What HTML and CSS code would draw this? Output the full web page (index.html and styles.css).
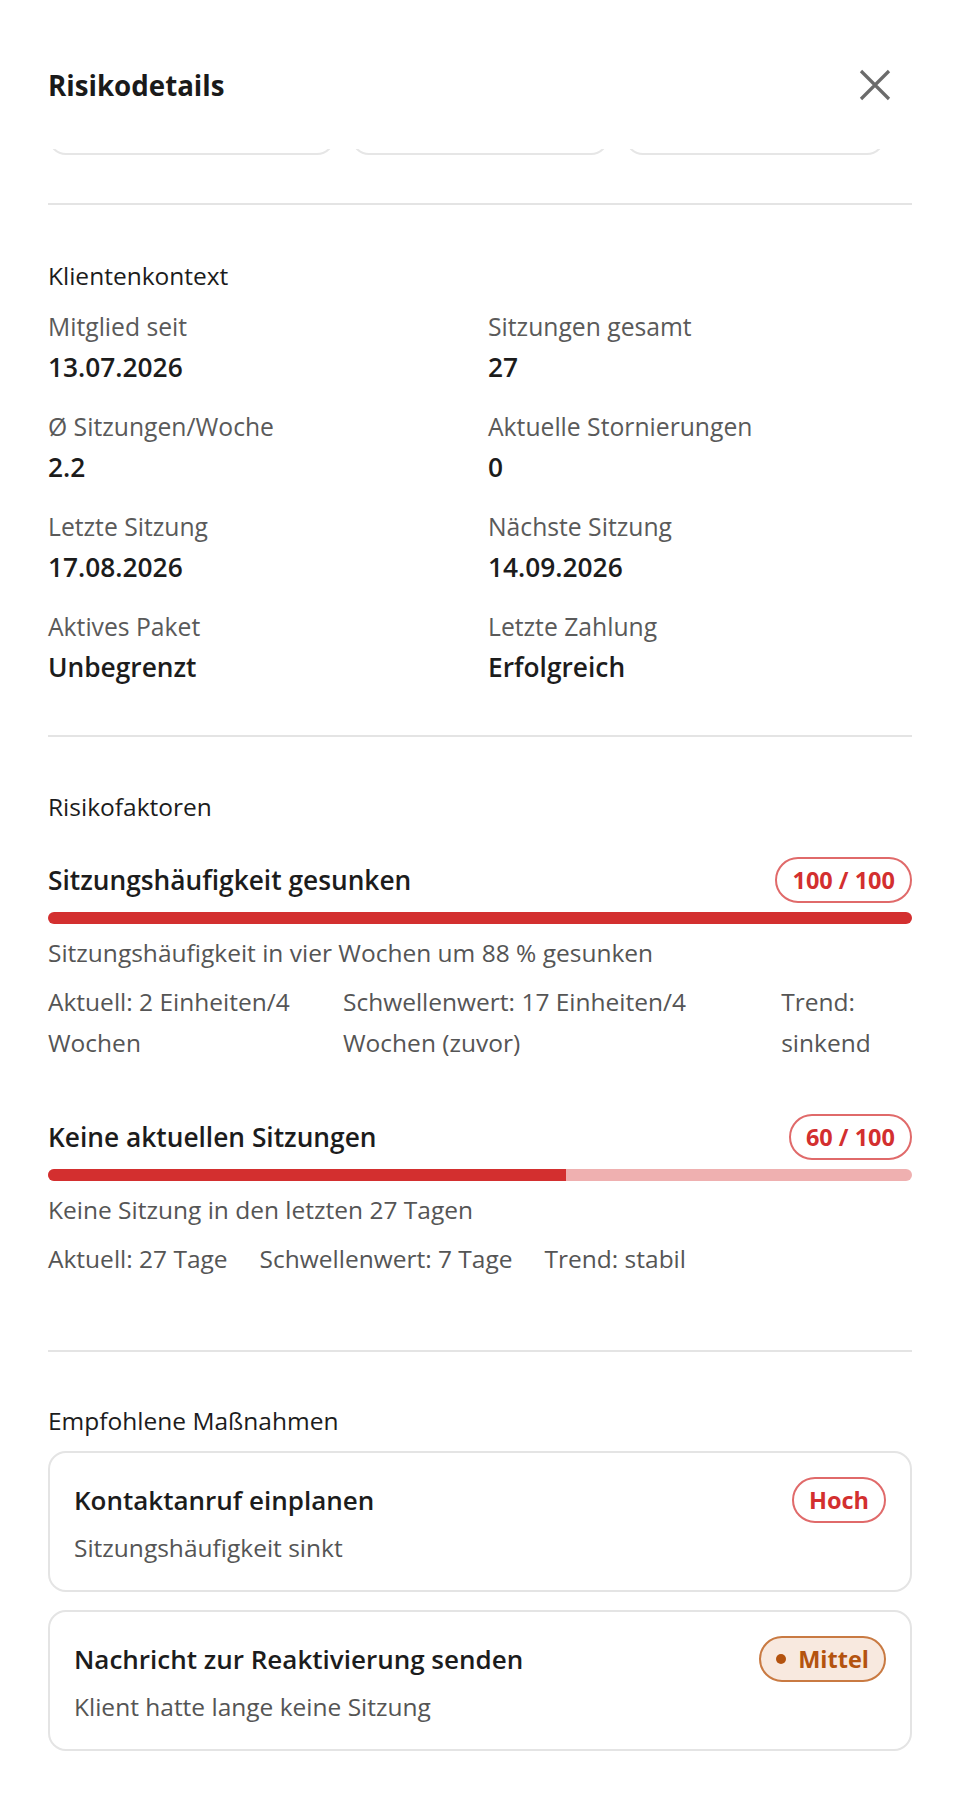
FILE: index.html
```html
<!DOCTYPE html>
<html lang="de">
<head>
<meta charset="utf-8">
<title>Risikodetails</title>
<link rel="stylesheet" href="styles.css">
</head>
<body>
<div class="panel">
  <header class="header">
    <h1 class="title">Risikodetails</h1>
    <button class="close" aria-label="Schließen">
      <svg width="40" height="40" viewBox="0 0 40 40" aria-hidden="true">
        <path d="M6 6 L34 34 M34 6 L6 34" stroke="#6b6b6b" stroke-width="3.2" fill="none"/>
      </svg>
    </button>
  </header>
  <div class="scroll">
    <div class="stats">
      <div class="stat stat-a"></div>
      <div class="stat stat-b"></div>
      <div class="stat stat-c"></div>
    </div>

    <section class="section section-context">
      <h2 class="section-title">Klientenkontext</h2>
      <div class="context-grid">
        <div class="item"><div class="label">Mitglied seit</div><div class="value">13.07.2026</div></div>
        <div class="item"><div class="label">Sitzungen gesamt</div><div class="value">27</div></div>
        <div class="item"><div class="label">Ø Sitzungen/Woche</div><div class="value">2.2</div></div>
        <div class="item"><div class="label">Aktuelle Stornierungen</div><div class="value">0</div></div>
        <div class="item"><div class="label">Letzte Sitzung</div><div class="value">17.08.2026</div></div>
        <div class="item"><div class="label">Nächste Sitzung</div><div class="value">14.09.2026</div></div>
        <div class="item"><div class="label">Aktives Paket</div><div class="value">Unbegrenzt</div></div>
        <div class="item"><div class="label">Letzte Zahlung</div><div class="value">Erfolgreich</div></div>
      </div>
    </section>

    <section class="section section-factors">
      <h2 class="section-title">Risikofaktoren</h2>
      <div class="factors">
        <div class="factor">
          <div class="factor-head">
            <span class="factor-title">Sitzungshäufigkeit gesunken</span>
            <span class="badge badge-red">100 / 100</span>
          </div>
          <div class="bar"><div class="bar-fill" style="width:100%"></div></div>
          <p class="factor-desc">Sitzungshäufigkeit in vier Wochen um 88 % gesunken</p>
          <div class="metrics">
            <span>Aktuell: 2 Einheiten/4 Wochen</span>
            <span>Schwellenwert: 17 Einheiten/4 Wochen (zuvor)</span>
            <span>Trend: sinkend</span>
          </div>
        </div>
        <div class="factor">
          <div class="factor-head">
            <span class="factor-title">Keine aktuellen Sitzungen</span>
            <span class="badge badge-red">60 / 100</span>
          </div>
          <div class="bar"><div class="bar-fill" style="width:60%"></div></div>
          <p class="factor-desc">Keine Sitzung in den letzten 27 Tagen</p>
          <div class="metrics">
            <span>Aktuell: 27 Tage</span>
            <span>Schwellenwert: 7 Tage</span>
            <span>Trend: stabil</span>
          </div>
        </div>
      </div>
    </section>

    <section class="section section-actions">
      <h2 class="section-title">Empfohlene Maßnahmen</h2>
      <div class="actions">
        <div class="action">
          <div class="action-head">
            <span class="action-title">Kontaktanruf einplanen</span>
            <span class="badge badge-red">Hoch</span>
          </div>
          <p class="action-desc">Sitzungshäufigkeit sinkt</p>
        </div>
        <div class="action">
          <div class="action-head">
            <span class="action-title">Nachricht zur Reaktivierung senden</span>
            <span class="badge badge-orange"><span class="dot"></span>Mittel</span>
          </div>
          <p class="action-desc">Klient hatte lange keine Sitzung</p>
        </div>
      </div>
    </section>
  </div>
</div>
</body>
</html>
```

FILE: styles.css
```css
* {
  box-sizing: border-box;
}

html, body {
  margin: 0;
  padding: 0;
  background: #ffffff;
}

body {
  font-family: "Open Sans", "Noto Sans", "Liberation Sans", sans-serif;
  color: #1c1c1c;
}

.panel {
  width: 960px;
}

.header {
  height: 149px;
  padding: 65px 48px 44px;
  display: flex;
  align-items: center;
  justify-content: space-between;
}

.title {
  margin: 0;
  font-size: 27.7px;
  line-height: 40px;
  font-weight: 700;
  color: #1a1a1a;
}

.close {
  width: 40px;
  height: 40px;
  margin-right: 17px;
  padding: 0;
  border: 0;
  background: none;
  display: block;
}

.close svg {
  display: block;
}

.scroll {
  overflow: hidden;
  padding: 0 48px;
}

.stats {
  display: flex;
  gap: 16px;
  height: 100px;
  margin-top: -94px;
}

.stat {
  height: 100px;
  border: 2px solid #e6e6e6;
  border-radius: 18px;
  background: #fff;
}

.stat-a { width: 287px; }
.stat-b { width: 258px; }
.stat-c { width: 260px; }

.section {
  border-top: 2px solid #e4e4e4;
}

.section-context {
  margin-top: 48px;
  padding: 53px 0 47px;
}

.section-factors {
  padding: 52px 0 71px;
}

.section-actions {
  padding: 51px 0 48px;
}

.section-title {
  margin: 0;
  font-size: 24.5px;
  line-height: 36px;
  font-weight: 500;
  color: #1c1c1c;
}

.context-grid {
  margin-top: 14px;
  display: grid;
  grid-template-columns: 1fr 1fr;
  column-gap: 16px;
  row-gap: 20px;
}

.label {
  font-size: 24.7px;
  line-height: 38px;
  color: #5a5a5a;
}

.value {
  font-size: 26.3px;
  line-height: 42px;
  font-weight: 600;
  color: #1c1c1c;
}

.factors {
  margin-top: 32px;
  display: flex;
  flex-direction: column;
  gap: 51px;
}

.factor-head,
.action-head {
  display: flex;
  align-items: center;
  justify-content: space-between;
  gap: 16px;
}

.factor-title,
.action-title {
  font-size: 26.3px;
  line-height: 40px;
  font-weight: 600;
  color: #1c1c1c;
}

.action-title {
  font-size: 26px;
}

.badge {
  display: inline-flex;
  align-items: center;
  height: 46px;
  padding: 0 15px;
  border: 2px solid #e06a6a;
  border-radius: 23px;
  font-size: 23.5px;
  line-height: 36px;
  font-weight: 700;
  color: #d32f2f;
  background: #fff;
  white-space: nowrap;
}

.badge-orange {
  border-color: #c97a42;
  background: #f8e9df;
  color: #b4530f;
  gap: 12px;
}

.dot {
  width: 10px;
  height: 10px;
  border-radius: 50%;
  background: #b4530f;
}

.bar {
  margin-top: 9px;
  height: 12px;
  border-radius: 6px;
  background: #efb0b0;
  overflow: hidden;
}

.bar-fill {
  height: 100%;
  background: #d32f2f;
}

.factor-desc {
  margin: 11px 0 0;
  font-size: 24.5px;
  line-height: 36px;
  color: #555555;
}

.metrics {
  margin-top: 10px;
  display: flex;
  gap: 32px;
  font-size: 24.5px;
  line-height: 41px;
  color: #555555;
}

.actions {
  margin-top: 12px;
  display: flex;
  flex-direction: column;
  gap: 18px;
}

.action {
  border: 2px solid #e4e4e4;
  border-radius: 18px;
  padding: 24px;
}

.action-desc {
  margin: 7px 0 0;
  font-size: 24.5px;
  line-height: 36px;
  color: #555555;
}
```
